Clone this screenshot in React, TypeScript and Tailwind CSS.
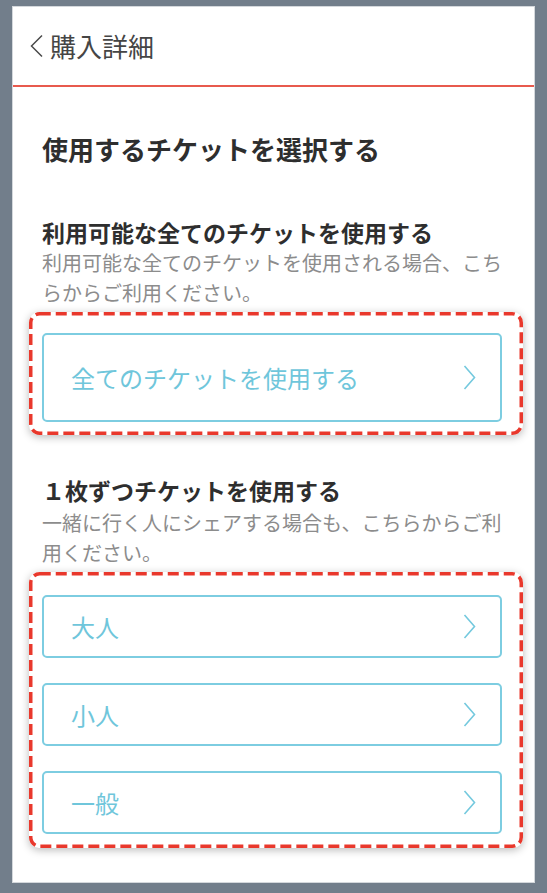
import React from 'react';

const font = { fontFamily: '"Noto Sans CJK JP", "Noto Sans", sans-serif' };

function Chevron() {
  return (
    <svg width="13" height="25" viewBox="0 0 13 25" fill="none" className="shrink-0">
      <polyline points="1.5,1 11.5,12.5 1.5,24" stroke="#74c9de" strokeWidth="1.6" />
    </svg>
  );
}

function TicketButton({ label, tall }: { label: string; tall?: boolean }) {
  return (
    <button
      className={`flex w-full items-center justify-between rounded-[5px] border-2 border-[#7dcde1] bg-white pl-[27px] pr-[24px] text-left ${
        tall ? 'h-[89px]' : 'h-[63px]'
      }`}
    >
      <span className="text-[24px] leading-none text-[#6fc6db]">{label}</span>
      <Chevron />
    </button>
  );
}

// red dashed annotation frame drawn over the group
function DashedFrame({ children, className }: { children: React.ReactNode; className: string }) {
  return (
    <div className={`relative mt-[4px] ml-[-13px] mr-[-21px] rounded-[10px] shadow-[0_2px_9px_rgba(0,0,0,0.28)] ${className}`}>
      {children}
      <svg className="pointer-events-none absolute inset-0 h-full w-full overflow-visible" fill="none">
        <rect
          x="1.75"
          y="1.75"
          rx="9"
          className="h-[calc(100%-3.5px)] w-[calc(100%-3.5px)]"
          stroke="#e9382c"
          strokeWidth="3.5"
          strokeDasharray="11 5"
        />
      </svg>
    </div>
  );
}

export default function App() {
  return (
    <div className="h-[893px] w-[547px] bg-[#727e8b] pt-[6px] pr-[12px] pb-[10px] pl-[12px]" style={font}>
      <div className="flex h-full flex-col border border-[#d4d8dc] bg-white">
        <header className="flex h-[80px] shrink-0 items-center gap-[7px] border-b-2 border-[#e85a4e] pl-[17px]">
          <svg width="13" height="24" viewBox="0 0 13 24" fill="none">
            <polyline points="12,1.5 1.5,12 12,22.5" stroke="#4a4a4a" strokeWidth="1.5" />
          </svg>
          <span className="text-[26px] leading-none text-[#454545]">購入詳細</span>
        </header>

        <main className="pl-[29px] pr-[32px]">
          <h1 className="mt-[43px] text-[26px] font-bold leading-[38px] text-[#2e2e2e]">使用するチケットを選択する</h1>

          <h2 className="mt-[48px] text-[23px] font-bold leading-[32px] text-[#2e2e2e]">利用可能な全てのチケットを使用する</h2>
          <p className="text-[20px] leading-[30px] text-[#8c8c8c]">
            利用可能な全てのチケットを使用される場合、こちらからご利用ください。
          </p>

          <DashedFrame className="pt-[21px] pr-[21px] pb-[13px] pl-[13px]">
            <TicketButton label="全てのチケットを使用する" tall />
          </DashedFrame>

          <h2 className="mt-[39px] text-[23px] font-bold leading-[32px] text-[#2e2e2e]">１枚ずつチケットを使用する</h2>
          <p className="mt-[2px] text-[20px] leading-[30px] text-[#8c8c8c]">
            一緒に行く人にシェアする場合も、こちらからご利用ください。
          </p>

          <DashedFrame className="flex flex-col gap-[25px] pt-[23px] pr-[21px] pb-[14px] pl-[13px]">
            <TicketButton label="大人" />
            <TicketButton label="小人" />
            <TicketButton label="一般" />
          </DashedFrame>
        </main>
      </div>
    </div>
  );
}
